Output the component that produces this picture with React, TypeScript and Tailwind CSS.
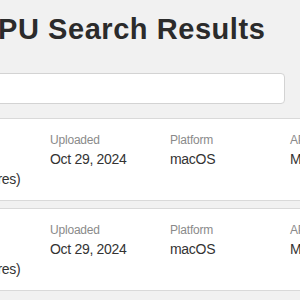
const results = [
  { gpu: "Apple M3 Max", detail: "Metal 3 (40 cores)", uploaded: "Oct 29, 2024", platform: "macOS", api: "Metal" },
  { gpu: "Apple M3 Max", detail: "Metal 3 (40 cores)", uploaded: "Oct 29, 2024", platform: "macOS", api: "Metal" },
];

const valueCls = "text-[14px] leading-[20px] tracking-[-0.3px] text-[#333] whitespace-nowrap";
const labelCls = "text-[12px] leading-[16px] tracking-[-0.2px] text-[#8a8a8a]";

function Field({ label, value }: { label: string; value: string }) {
  return (
    <div className="w-[120px] shrink-0">
      <div className={labelCls}>{label}</div>
      <div className={`mt-[1px] ${valueCls}`}>{value}</div>
    </div>
  );
}

export default function App() {
  return (
    <div className="w-[300px] h-[300px] overflow-hidden bg-[#f1f1f1] font-['Liberation_Sans',Arial,sans-serif]">
      <div className="-ml-[104px] w-[480px]">
        <h1 className="ml-[79px] pt-[12px] text-[29px] leading-[34px] font-bold tracking-[0.55px] text-[#2b2b2b] whitespace-nowrap">
          GPU Search Results
        </h1>

        <input
          type="text"
          className="mt-[27px] ml-[79px] block w-[310px] h-[31px] rounded-[4px] border border-[#d3d3d3] bg-white px-3 text-[14px] outline-none"
        />

        <div className="mt-[14px] flex flex-col gap-[7px]">
          {results.map((r, i) => (
            <div key={i} className="flex border border-[#d9d9d9] bg-white px-4 pt-[13px] pb-[11px]">
              <div className="w-[137px] shrink-0">
                <div className={labelCls}>GPU</div>
                <div className={`mt-[1px] ${valueCls}`}>{r.gpu}</div>
                <div className={valueCls}>{r.detail}</div>
              </div>
              <Field label="Uploaded" value={r.uploaded} />
              <Field label="Platform" value={r.platform} />
              <Field label="API" value={r.api} />
            </div>
          ))}
        </div>
      </div>
    </div>
  );
}
